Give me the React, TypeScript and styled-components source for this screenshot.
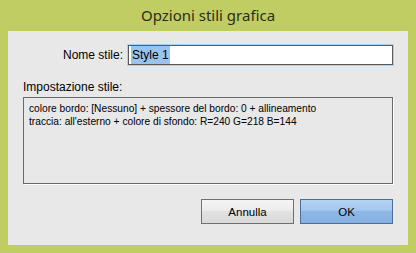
import styled, { createGlobalStyle } from 'styled-components';

const GlobalStyle = createGlobalStyle`
  html, body {
    margin: 0;
    padding: 0;
    background: #bfcd63;
  }
`;

const Frame = styled.div`
  width: 416px;
  height: 253px;
  box-sizing: border-box;
  background: #bfcd63;
  padding: 0 8px 8px;
  display: flex;
  flex-direction: column;
`;

const TitleBar = styled.div`
  height: 31px;
  display: flex;
  align-items: center;
  justify-content: center;
  font-family: 'Noto Sans', sans-serif;
  font-size: 15px;
  color: #2a2f1a;
  padding-bottom: 1px;
  box-sizing: border-box;
`;

const Client = styled.div`
  flex: 1;
  background: #e8e8e8;
  padding: 14px 15px 0;
  display: flex;
  flex-direction: column;
  font-family: 'Liberation Sans', Arial, sans-serif;
  font-size: 12px;
  color: #000;
`;

const NameRow = styled.div`
  display: flex;
  align-items: center;
  justify-content: flex-end;
  gap: 5px;
`;

const Label = styled.label`
  font-size: 12px;
`;

const NameInput = styled.div`
  width: 265px;
  height: 20px;
  box-sizing: border-box;
  border: 1px solid #5a5a5a;
  box-shadow: 0 0 0 1px #a9d1f2;
  background: #fff;
  display: flex;
  align-items: center;
  padding-left: 2px;
  font-size: 12px;
`;

const Selected = styled.span`
  background: #99c4ee;
  padding: 2px 1px 2px;
`;

const SectionLabel = styled.div`
  margin-top: 15px;
  font-size: 12px;
`;

const StyleBox = styled.div`
  margin-top: 3px;
  height: 87px;
  box-sizing: border-box;
  border: 1px solid #6a6a6a;
  box-shadow: 1px 1px 0 #fff;
  padding: 4px 5px;
  font-size: 10.2px;
  line-height: 13px;
`;

const ButtonRow = styled.div`
  margin-top: 15px;
  display: flex;
  justify-content: flex-end;
  gap: 6px;
`;

const Button = styled.div<{ $primary?: boolean }>`
  width: 93px;
  height: 25px;
  box-sizing: border-box;
  border: 1px solid ${(p) => (p.$primary ? '#4d6f95' : '#707070')};
  background: ${(p) =>
    p.$primary
      ? 'linear-gradient(#b4d4f2 0%, #a3c7ee 45%, #8fb6e6 50%, #86b0e4 100%)'
      : 'linear-gradient(#f4f4f4 0%, #ececec 45%, #e2e2e2 50%, #d9d9d9 100%)'};
  display: flex;
  align-items: center;
  justify-content: center;
  font-size: 11.5px;
`;

export default function App() {
  return (
    <>
      <GlobalStyle />
      <Frame>
        <TitleBar>Opzioni stili grafica</TitleBar>
        <Client>
          <NameRow>
            <Label>Nome stile:</Label>
            <NameInput>
              <Selected>Style 1</Selected>
            </NameInput>
          </NameRow>
          <SectionLabel>Impostazione stile:</SectionLabel>
          <StyleBox>
            colore bordo: [Nessuno] + spessore del bordo: 0 + allineamento
            <br />
            traccia: all'esterno + colore di sfondo: R=240 G=218 B=144
          </StyleBox>
          <ButtonRow>
            <Button>Annulla</Button>
            <Button $primary>OK</Button>
          </ButtonRow>
        </Client>
      </Frame>
    </>
  );
}
